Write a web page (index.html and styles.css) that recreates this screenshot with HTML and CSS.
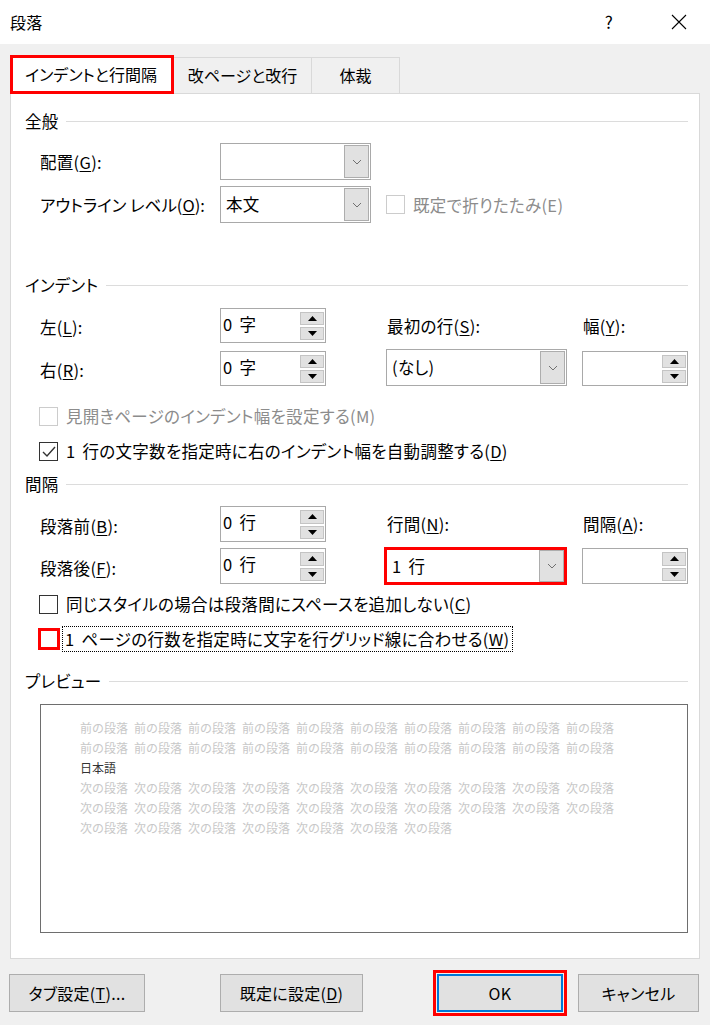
FILE: index.html
```html
<!DOCTYPE html>
<html lang="ja">
<head>
    <meta charset="UTF-8">
    <title>段落</title>
    <link rel="stylesheet" href="styles.css">
</head>
<body>

    <!-- タイトルバー -->
    <div class="titlebar">
        <span class="title">段落</span>
        <span class="help">?</span>
        <span class="close">
            <svg width="16" height="16" viewBox="0 0 16 16"><path d="M1 1L15 15M15 1L1 15" stroke="#000" stroke-width="1.1" fill="none"/></svg>
        </span>
    </div>

    <!-- タブ -->
    <div class="tabs">
        <div class="tab active">インデントと行間隔</div>
        <div class="tab t2">改ページと改行</div>
        <div class="tab t3">体裁</div>
    </div>

    <div class="panel">

        <!-- 全般 -->
        <div class="group-title g1"><span>全般</span><i></i></div>

        <div class="row r1">
            <label class="lbl">配置(<u>G</u>):</label>
            <div class="select sel150">
                <span class="val"></span>
                <span class="drop"><svg width="10" height="6"><polyline points="1,1 5,5 9,1" stroke="#707070" fill="none"/></svg></span>
            </div>
        </div>

        <div class="row r2">
            <label class="lbl tight">アウトライン レベル(<u>O</u>):</label>
            <div class="select sel150">
                <span class="val">本文</span>
                <span class="drop"><svg width="10" height="6"><polyline points="1,1 5,5 9,1" stroke="#707070" fill="none"/></svg></span>
            </div>
            <div class="check disabled inline">
                <span class="box"></span>
                <span>既定で折りたたみ(E)</span>
            </div>
        </div>

        <!-- インデント -->
        <div class="group-title g2"><span>インデント</span><i></i></div>

        <div class="grid grid1">
            <label class="lbl">左(<u>L</u>):</label>
            <div class="spin">
                <span class="val">0 字</span>
                <span class="btns">
                    <b><svg width="9" height="5"><polygon points="0,5 4.5,0 9,5"/></svg></b>
                    <b><svg width="9" height="5"><polygon points="0,0 4.5,5 9,0"/></svg></b>
                </span>
            </div>
            <label class="lbl top">最初の行(<u>S</u>):</label>
            <label class="lbl top">幅(<u>Y</u>):</label>

            <label class="lbl">右(<u>R</u>):</label>
            <div class="spin">
                <span class="val">0 字</span>
                <span class="btns">
                    <b><svg width="9" height="5"><polygon points="0,5 4.5,0 9,5"/></svg></b>
                    <b><svg width="9" height="5"><polygon points="0,0 4.5,5 9,0"/></svg></b>
                </span>
            </div>
            <div class="select sel181">
                <span class="val">(なし)</span>
                <span class="drop"><svg width="10" height="6"><polyline points="1,1 5,5 9,1" stroke="#707070" fill="none"/></svg></span>
            </div>
            <div class="spin">
                <span class="val"></span>
                <span class="btns">
                    <b><svg width="9" height="5"><polygon points="0,5 4.5,0 9,5"/></svg></b>
                    <b><svg width="9" height="5"><polygon points="0,0 4.5,5 9,0"/></svg></b>
                </span>
            </div>
        </div>

        <div class="check disabled c1">
            <span class="box"></span>
            <span>見開きページのインデント幅を設定する(M)</span>
        </div>
        <div class="check c2">
            <span class="box"><svg width="17" height="17"><polyline points="3,9 7,13 15,4" stroke="#333" stroke-width="1.4" fill="none"/></svg></span>
            <span>1 行の文字数を指定時に右のインデント幅を自動調整する(<u>D</u>)</span>
        </div>

        <!-- 間隔 -->
        <div class="group-title g3"><span>間隔</span><i></i></div>

        <div class="grid grid2">
            <label class="lbl">段落前(<u>B</u>):</label>
            <div class="spin">
                <span class="val">0 行</span>
                <span class="btns">
                    <b><svg width="9" height="5"><polygon points="0,5 4.5,0 9,5"/></svg></b>
                    <b><svg width="9" height="5"><polygon points="0,0 4.5,5 9,0"/></svg></b>
                </span>
            </div>
            <label class="lbl top">行間(<u>N</u>):</label>
            <label class="lbl top">間隔(<u>A</u>):</label>

            <label class="lbl">段落後(<u>F</u>):</label>
            <div class="spin">
                <span class="val">0 行</span>
                <span class="btns">
                    <b><svg width="9" height="5"><polygon points="0,5 4.5,0 9,5"/></svg></b>
                    <b><svg width="9" height="5"><polygon points="0,0 4.5,5 9,0"/></svg></b>
                </span>
            </div>
            <div class="select sel181 marked">
                <span class="val">1 行</span>
                <span class="drop"><svg width="10" height="6"><polyline points="1,1 5,5 9,1" stroke="#707070" fill="none"/></svg></span>
            </div>
            <div class="spin">
                <span class="val"></span>
                <span class="btns">
                    <b><svg width="9" height="5"><polygon points="0,5 4.5,0 9,5"/></svg></b>
                    <b><svg width="9" height="5"><polygon points="0,0 4.5,5 9,0"/></svg></b>
                </span>
            </div>
        </div>

        <div class="check c3">
            <span class="box"></span>
            <span>同じスタイルの場合は段落間にスペースを追加しない(<u>C</u>)</span>
        </div>
        <div class="check c4">
            <span class="box marked"></span>
            <span class="focus">1 ページの行数を指定時に文字を行グリッド線に合わせる(<u>W</u>)</span>
        </div>

        <!-- プレビュー -->
        <div class="group-title g4"><span>プレビュー</span><i></i></div>

        <div class="preview">
            <div class="pline prev"><span>前の段落</span><span>前の段落</span><span>前の段落</span><span>前の段落</span><span>前の段落</span><span>前の段落</span><span>前の段落</span><span>前の段落</span><span>前の段落</span><span>前の段落</span></div>
            <div class="pline prev"><span>前の段落</span><span>前の段落</span><span>前の段落</span><span>前の段落</span><span>前の段落</span><span>前の段落</span><span>前の段落</span><span>前の段落</span><span>前の段落</span><span>前の段落</span></div>
            <div class="pline cur"><span>日本語</span></div>
            <div class="pline prev"><span>次の段落</span><span>次の段落</span><span>次の段落</span><span>次の段落</span><span>次の段落</span><span>次の段落</span><span>次の段落</span><span>次の段落</span><span>次の段落</span><span>次の段落</span></div>
            <div class="pline prev"><span>次の段落</span><span>次の段落</span><span>次の段落</span><span>次の段落</span><span>次の段落</span><span>次の段落</span><span>次の段落</span><span>次の段落</span><span>次の段落</span><span>次の段落</span></div>
            <div class="pline prev"><span>次の段落</span><span>次の段落</span><span>次の段落</span><span>次の段落</span><span>次の段落</span><span>次の段落</span><span>次の段落</span></div>
        </div>
    </div>

    <!-- ボタン -->
    <div class="buttons">
        <button class="btn b-tab">タブ設定(<u>T</u>)...</button>
        <button class="btn b-def">既定に設定(<u>D</u>)</button>
        <button class="btn b-ok">OK</button>
        <button class="btn b-cancel">キャンセル</button>
    </div>

</body>
</html>
```

FILE: styles.css
```css
body { margin: 0; background: #f0f0f0; font-family: "Noto Sans CJK JP", sans-serif; font-size: 16.5px; letter-spacing: 0.3px; word-spacing: 3px; color: #000; font-feature-settings: "palt"; width: 710px; height: 1025px; overflow: hidden; }
u { text-decoration: underline; text-underline-offset: 2px; }

/* タイトルバー */
.titlebar { height: 44px; background: #fff; display: flex; align-items: center; }
.title { flex: 1; padding-left: 10px; font-size: 16px; line-height: 20px; }
.help { width: 12px; text-align: center; margin-right: 56px; font-size: 17px; line-height: 20px; }
.close { width: 16px; height: 16px; margin-right: 23px; }
.close svg { display: block; }

/* タブ */
.tabs { display: flex; align-items: flex-end; margin-top: 11px; padding-left: 10px; position: relative; z-index: 2; font-size: 16px; letter-spacing: 0; }
.tab { box-sizing: border-box; height: 36px; line-height: 34px; border: 1px solid #d9d9d9; border-bottom: none; background: #f0f0f0; text-align: center; }
.tab.active { height: 39px; width: 164px; border: 3px solid #f00; background: #fff; line-height: 32px; text-align: left; padding-left: 12px; margin-bottom: -1px; }
.tab.t2 { width: 138px; border-left: none; }
.tab.t3 { width: 88px; border-left: none; }

/* パネル */
.panel { box-sizing: border-box; margin: 0 10px; height: 866px; background: #fff; border: 1px solid #d9d9d9; padding: 0 11px 0 14px; position: relative; z-index: 1; overflow: hidden; }

.group-title { display: flex; align-items: center; height: 20px; line-height: 20px; }
.group-title span { margin-right: 7px; }
.group-title i { flex: 1; height: 1px; background: #dcdcdc; }
.g1 { margin-top: 17px; }
.g2 { margin-top: 52px; }
.g3 { margin-top: 13px; }
.g4 { margin-top: 22px; }

.lbl { line-height: 20px; }
.lbl.tight { word-spacing: 0; letter-spacing: 0; }
.row { display: flex; align-items: center; margin-left: 15px; }
.row .lbl { width: 180px; }
.r1 { margin-top: 12px; }
.r2 { margin-top: 6px; }

/* ドロップダウン */
.select { box-sizing: border-box; display: flex; align-items: stretch; height: 37px; border: 1px solid #a9a9a9; background: #fff; padding: 1px; }
.select .val { flex: 1; padding-left: 4px; line-height: 33px; }
.select .drop { width: 25px; background: #e1e1e1; border: 1px solid #adadad; box-sizing: border-box; display: flex; align-items: center; justify-content: center; }
.select .drop svg { display: block; }
.sel150 { width: 151px; }
.sel181 { width: 181px; }
.select.marked { width: 183px; height: 38px; border: 3px solid #f00; padding: 0; margin-left: -2px; }
.select.marked .val { line-height: 32px; padding-left: 5px; }

/* スピン */
.spin { box-sizing: border-box; display: flex; width: 106px; height: 35px; border: 1px solid #a9a9a9; background: #fff; }
.spin .val { flex: 1; padding-left: 2px; line-height: 30px; }
.spin .btns { display: flex; flex-direction: column; gap: 2px; width: 24px; padding: 3px 1px 2px 0; }
.spin .btns b { flex: 1; background: #e1e1e1; border: 1px solid #c4c4c4; display: flex; align-items: center; justify-content: center; }
.spin .btns svg { display: block; }

.grid { display: grid; grid-template-columns: 180px 166px 196px 106px; align-items: center; margin-left: 15px; }
.grid1 { margin-top: 13px; grid-template-rows: 35px 35px; row-gap: 8px; }
.grid2 { margin-top: 12px; grid-template-rows: 36px 36px; row-gap: 6px; }
.grid .lbl { padding-top: 3px; }
.grid .lbl.top { padding-left: 1px; padding-top: 0; }
.grid .spin { height: 100%; }
.grid .sel181 { height: 37px; align-self: end; }
.grid2 .select.marked { height: 38px; align-self: center; }

/* チェックボックス */
.check { display: flex; align-items: center; height: 20px; line-height: 20px; margin-left: 14px; }
.check .box { box-sizing: border-box; width: 19px; height: 19px; border: 1px solid #333; background: #fff; margin-right: 8px; flex: none; }
.check .box svg { display: block; }
.check.disabled { color: #8c8c8c; }
.check.disabled .box { border-color: #cccccc; }
.check.inline { margin-left: 15px; }
.check .box.marked { width: 22px; height: 22px; border: 3px solid #f00; margin-left: -1px; margin-right: 5px; }
.check .focus { outline: 1px dotted #000; outline-offset: 2px; padding-right: 1px; }
.c1 { margin-top: 20px; }
.c2 { margin-top: 15px; }
.c3 { margin-top: 10px; }
.c4 { margin-top: 15px; }

/* プレビュー */
.preview { box-sizing: border-box; margin: 13px 0 0 15px; width: 648px; height: 229px; border: 1px solid #6e6e6e; padding: 13px 0 0 39px; }
.pline { height: 20px; line-height: 20px; font-size: 12px; letter-spacing: 0; word-spacing: 0; white-space: nowrap; font-feature-settings: normal; }
.pline span { display: inline-block; width: 48px; margin-right: 6px; }
.pline.prev { color: #c8c8c8; }
.pline.cur { color: #333; }

/* ボタン */
.buttons { display: flex; margin-top: 15px; padding-left: 9px; }
.btn { box-sizing: border-box; height: 38px; background: #e1e1e1; border: 1px solid #adadad; font-family: inherit; font-size: 16px; letter-spacing: 0.3px; font-feature-settings: "palt"; color: #000; padding: 0; }
.b-tab { width: 136px; }
.b-def { width: 143px; margin-left: 75px; }
.b-ok { width: 126px; margin-left: 74px; border: 2px solid #0078d7; outline: 3px solid #f00; outline-offset: 1px; }
.b-cancel { width: 121px; margin-left: 15px; }
```
